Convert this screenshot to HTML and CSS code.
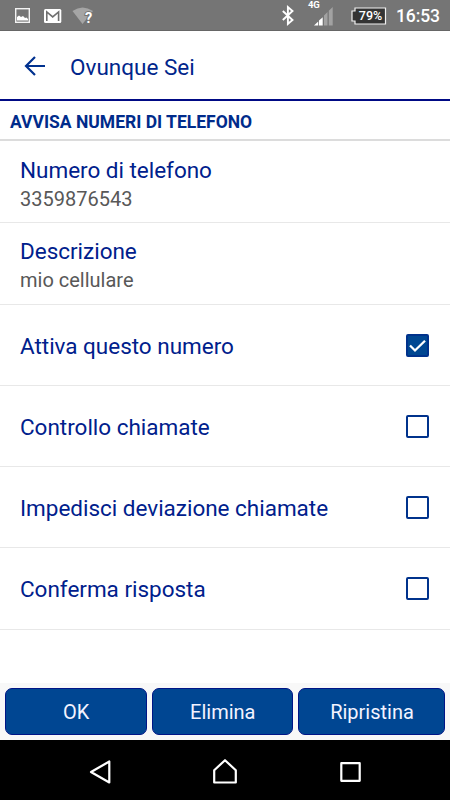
FILE: index.html
```html
<!DOCTYPE html>
<html lang="it">
<head>
<meta charset="utf-8">
<title>Ovunque Sei</title>
<link rel="stylesheet" href="styles.css">
</head>
<body>
<div class="screen">
  <div class="status">
    <svg class="status-icons" width="100" height="31" viewBox="0 0 100 31">
      <rect x="15.7" y="8.7" width="13.6" height="13.6" fill="none" stroke="#f3f3f3" stroke-width="1.4"/>
      <path d="M17 20.5V17l2-1.5 2 1.5 2-1 2 2 1.5-.5 1.5 1.5v1.5z" fill="#fff"/>
      <rect x="44" y="9" width="17.3" height="14" rx="1.5" fill="#fff"/>
      <path d="M46.8 21V11.9l5.9 5 5.9-5V21" fill="none" stroke="#6f6f6f" stroke-width="1.6"/>
      <path d="M72.5 11Q82.5 4 93 11L82.5 24z" fill="#a5a5a5"/>
      <text x="85" y="23" class="question">?</text>
    </svg>
    <svg class="bluetooth" width="14" height="31" viewBox="0 0 14 31"><path d="M1.8 11l9.7 9-4.6 4V7l4.6 4-9.7 9" fill="none" stroke="#fff" stroke-width="1.9"/></svg>
    <div class="signal">
      <span class="network">4G</span>
      <svg width="20" height="31" viewBox="0 0 20 31"><path d="M0 25.5l4.2-4v4z" fill="#fff"/><path d="M5 25.5v-5l3.7-3.2v8.2z" fill="#fff"/><path d="M10 25.5v-10l3.5-3.5v13.5zM14.8 25.5V10.7L18.7 7v18.5z" fill="#a2a2a2"/></svg>
    </div>
    <div class="battery"><svg width="36" height="18" viewBox="0 0 36 18"><path d="M4 1h30.5v16H4v-3H1V4h3z" fill="#343434" stroke="#f1f1f1" stroke-width="1.2"/></svg><span class="percent">79%</span></div>
    <span class="clock">16:53</span>
  </div>
  <header class="bar">
    <svg class="back" width="22" height="22" viewBox="0 0 22 22"><path d="M21 11H2M11 2l-9 9 9 9" fill="none" stroke="#00318f" stroke-width="2.2"/></svg>
    <h1 class="title">Ovunque Sei</h1>
  </header>
  <h2 class="section">AVVISA NUMERI DI TELEFONO</h2>
  <main class="list">
    <div class="row"><div><div class="label">Numero di telefono</div><div class="value">3359876543</div></div></div>
    <div class="row"><div><div class="label">Descrizione</div><div class="value">mio cellulare</div></div></div>
    <div class="row"><div class="label">Attiva questo numero</div><span class="check on"><svg width="23" height="23" viewBox="0 0 23 23"><path d="M4 11.5l5 5L19 6.7" fill="none" stroke="#fff" stroke-width="2.3"/></svg></span></div>
    <div class="row"><div class="label">Controllo chiamate</div><span class="check"></span></div>
    <div class="row"><div class="label">Impedisci deviazione chiamate</div><span class="check"></span></div>
    <div class="row"><div class="label">Conferma risposta</div><span class="check"></span></div>
  </main>
  <div class="actions">
    <button class="btn">OK</button>
    <button class="btn">Elimina</button>
    <button class="btn">Ripristina</button>
  </div>
  <nav class="nav">
    <svg width="450" height="60" viewBox="0 0 450 60" fill="none" stroke="#fff" stroke-width="2.2" stroke-linejoin="round">
      <path d="M109.3 21.5v21L91 32z"/>
      <path d="M214.2 42.5V30.3L225 20.2l10.8 10.1v12.2z"/>
      <path d="M341.3 23.2h18.4v17.6h-18.4z"/>
    </svg>
  </nav>
</div>
</body>
</html>
```

FILE: styles.css
```css
* { box-sizing: border-box; }
body { margin: 0; font-family: Roboto, "Liberation Sans", sans-serif; background: #fff; }
.screen { width: 450px; height: 800px; display: flex; flex-direction: column; overflow: hidden; }
.status { height: 31px; background: #757575; border-bottom: 1px solid #666; display: flex; color: #fff; flex: none; }
.status svg { display: block; }
.status-icons { flex: none; }
.question { font: bold 14.5px Roboto, sans-serif; fill: #fff; stroke: #757575; stroke-width: 2px; paint-order: stroke; }
.bluetooth { margin-left: 181px; flex: none; }
.signal { position: relative; width: 20px; margin-left: 19px; flex: none; }
.network { position: absolute; left: -6px; top: 0; font: bold 9.5px/10px Roboto, sans-serif; letter-spacing: -.3px; }
.battery { position: relative; width: 36px; margin: 7px 0 0 17px; flex: none; }
.percent { position: absolute; left: 5px; top: 0; width: 29px; text-align: center; font: 500 12.5px/18px Roboto, sans-serif; }
.clock { margin-left: 9px; font-size: 17.5px; font-weight: 500; line-height: 33px; letter-spacing: -.1px; }
.bar { height: 70px; flex: none; display: flex; align-items: center; border-bottom: 2px solid #000a85; padding: 2px 0 0 24px; }
.back { margin-top: -1px; }
.title { margin: 2px 0 0 24px; font-size: 22.5px; font-weight: 400; color: #00258b; }
.section { height: 40px; flex: none; margin: 0; padding: 2px 10px 0; border-bottom: 2px solid #dcdcdc; font-size: 17.5px; line-height: 38px; font-weight: 700; color: #002b8b; }
.list { flex: 1; padding-top: 1px; }
.row { height: 81.25px; padding: 1px 21px 0 20px; display: flex; align-items: center; justify-content: space-between; border-bottom: 1px solid #e8e8e8; }
.label { font-size: 22.5px; line-height: 30px; padding-top: 1px; color: #00208c; letter-spacing: -.02px; }
.value { font-size: 20px; line-height: 27px; position: relative; top: 1px; color: #585858; }
.check { width: 23px; height: 23px; border: 2px solid #00328c; border-radius: 2px; flex: none; }
.check.on { background: #004792; }
.check svg { display: block; margin: -2px; }
.actions { height: 57px; flex: none; background: #f8f8f8; display: grid; grid-template-columns: 141.5px 141.5px 147px; gap: 5px; padding: 5px; }
.btn { font: 400 20px Roboto, sans-serif; color: #f3f3ff; background: #004692; border: 1px solid #001586; border-radius: 7px; padding: 0 0 0 1px; height: 47px; }
.nav { height: 60px; flex: none; background: #000; }
.nav svg { display: block; }
```
